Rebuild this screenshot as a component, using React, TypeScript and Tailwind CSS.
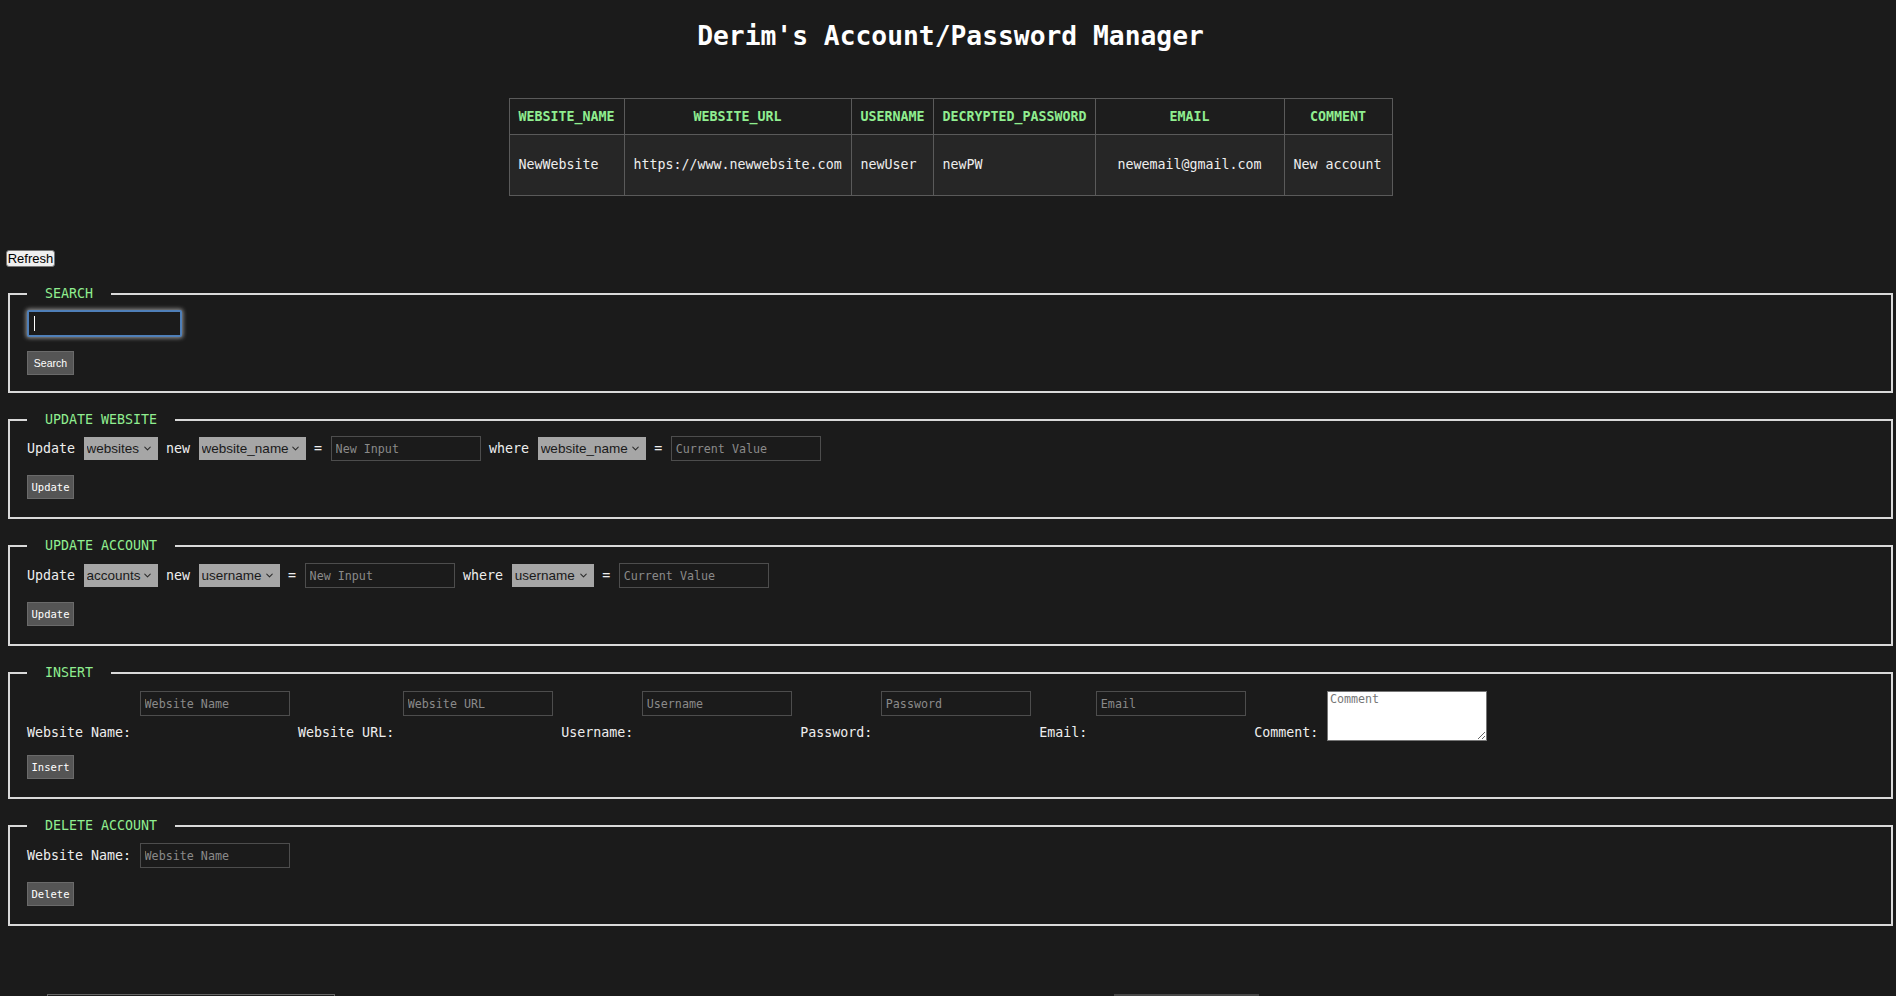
import { ChevronDown } from "lucide-react";
import type { ReactNode } from "react";

const columns = [
  { key: "WEBSITE_NAME", width: "w-[115px]" },
  { key: "WEBSITE_URL", width: "w-[227px]" },
  { key: "USERNAME", width: "w-[82px]" },
  { key: "DECRYPTED_PASSWORD", width: "w-[162px]" },
  { key: "EMAIL", width: "w-[189px]" },
  { key: "COMMENT", width: "w-[108px]" },
];

const row = {
  WEBSITE_NAME: "NewWebsite",
  WEBSITE_URL: "https://www.newwebsite.com",
  USERNAME: "newUser",
  DECRYPTED_PASSWORD: "newPW",
  EMAIL: "newemail@gmail.com",
  COMMENT: "New account",
};

function Section({ title, pad, children }: { title: string; pad: string; children: ReactNode }) {
  return (
    <fieldset className={`border-2 border-[#d9d9d9] pl-[17px] pr-[17px] ${pad}`}>
      <legend className="px-[18px] leading-[16px] text-[#90ee90]">{title}</legend>
      {children}
    </fieldset>
  );
}

function Btn({ label, sans }: { label: string; sans?: boolean }) {
  return (
    <button
      className={`mt-[14px] block h-[24px] w-[47px] border border-[#6a6a6a] bg-[#555555] text-[10.5px] text-white ${
        sans ? "font-['Liberation_Sans',Arial,sans-serif]" : ""
      }`}
    >
      {label}
    </button>
  );
}

function Dropdown({ value, width }: { value: string; width: string }) {
  return (
    <div className="relative flex items-center">
      <select
        defaultValue={value}
        className={`h-[23px] ${width} appearance-none bg-[#a6a6a6] pl-[3px] pr-[16px] font-['Liberation_Sans',Arial,sans-serif] text-[13.5px] text-[#1a1a1a]`}
      >
        <option value={value}>{value}</option>
      </select>
      <ChevronDown size={11} strokeWidth={2.2} className="pointer-events-none absolute right-[5px] text-[#2a2a2a]" />
    </div>
  );
}

function Field({ placeholder, self }: { placeholder: string; self?: string }) {
  return (
    <input
      placeholder={placeholder}
      className={`h-[25px] w-[150px] border border-[#4d4d4d] bg-transparent px-[4px] text-[11.7px] text-white placeholder:text-[#8a8a8a] ${self ?? ""}`}
    />
  );
}

export default function App() {
  return (
    <div className="min-h-screen bg-[#1b1b1b] pb-10 font-['DejaVu_Sans_Mono','Liberation_Mono',monospace] text-[13.3px] leading-[16px] text-[#eeeeee]">
      <h1 className="pl-[5px] pt-[20px] text-center text-[26.3px] font-bold leading-[32px] text-white">
        Derim's Account/Password Manager
      </h1>

      <div className="mt-[46px] flex justify-center pl-[5px]">
        <table className="w-[883px] table-fixed border-collapse border border-[#5a5a5a]">
          <thead>
            <tr className="h-[36px] bg-[#1d1d1d]">
              {columns.map((c) => (
                <th key={c.key} className={`${c.width} border border-[#5a5a5a] px-[9px] text-center font-bold text-[#90ee90]`}>
                  {c.key}
                </th>
              ))}
            </tr>
          </thead>
          <tbody>
            <tr className="h-[61px] bg-[#262626]">
              {columns.map((c) => (
                <td
                  key={c.key}
                  className={`border border-[#5a5a5a] px-[9px] ${c.key === "EMAIL" ? "text-center" : "text-left"}`}
                >
                  {row[c.key as keyof typeof row]}
                </td>
              ))}
            </tr>
          </tbody>
        </table>
      </div>

      <button className="ml-[6px] mt-[54px] block h-[17px] w-[49px] rounded-[3px] border border-[#767676] bg-[#efefef] font-['Liberation_Sans',Arial,sans-serif] text-[13px] leading-none text-black">
        Refresh
      </button>

      <div className="ml-[8px] mr-[3px] mt-[19px] flex flex-col gap-[19px]">
        <Section title="SEARCH" pad="pt-[8px] pb-[16px]">
          <div className="relative h-[27px] w-[155px]">
            <input className="h-full w-full rounded-[2px] border-2 border-[#4f7fb8] bg-[#1b1b1b] px-[5px] text-white shadow-[0_0_4px_1px_rgba(255,255,255,0.55)]" />
            <span className="absolute left-[7px] top-[6px] h-[15px] w-[1px] bg-white" />
          </div>
          <Btn label="Search" sans />
        </Section>

        <Section title="UPDATE WEBSITE" pad="pt-[8px] pb-[18px]">
          <div className="flex items-center gap-[8.5px]">
            <span>Update</span>
            <Dropdown value="websites" width="w-[74px]" />
            <span>new</span>
            <Dropdown value="website_name" width="w-[107px]" />
            <span>=</span>
            <Field placeholder="New Input" />
            <span>where</span>
            <Dropdown value="website_name" width="w-[108px]" />
            <span>=</span>
            <Field placeholder="Current Value" />
          </div>
          <Btn label="Update" />
        </Section>

        <Section title="UPDATE ACCOUNT" pad="pt-[9px] pb-[18px]">
          <div className="flex items-center gap-[8.5px]">
            <span>Update</span>
            <Dropdown value="accounts" width="w-[74px]" />
            <span>new</span>
            <Dropdown value="username" width="w-[81px]" />
            <span>=</span>
            <Field placeholder="New Input" />
            <span>where</span>
            <Dropdown value="username" width="w-[82px]" />
            <span>=</span>
            <Field placeholder="Current Value" />
          </div>
          <Btn label="Update" />
        </Section>

        <Section title="INSERT" pad="pt-[10px] pb-[18px]">
          <div className="flex items-end gap-[8.5px]">
            <span>Website Name:</span>
            <Field placeholder="Website Name" self="self-start" />
            <span>Website URL:</span>
            <Field placeholder="Website URL" self="self-start" />
            <span>Username:</span>
            <Field placeholder="Username" self="self-start" />
            <span>Password:</span>
            <Field placeholder="Password" self="self-start" />
            <span>Email:</span>
            <Field placeholder="Email" self="self-start" />
            <span>Comment:</span>
            <textarea
              placeholder="Comment"
              className="h-[50px] w-[160px] resize border border-[#767676] bg-white px-[2px] text-[11.7px] leading-[14px] text-black placeholder:text-[#777777]"
            />
          </div>
          <Btn label="Insert" />
        </Section>

        <Section title="DELETE ACCOUNT" pad="pt-[9px] pb-[18px]">
          <div className="flex items-center gap-[8.5px]">
            <span>Website Name:</span>
            <Field placeholder="Website Name" />
          </div>
          <Btn label="Delete" />
        </Section>
      </div>

      <div className="mt-[68px] flex items-start">
        <div className="ml-[47px] h-[30px] w-[288px] border border-[#666666] bg-[#1f1f1f]" />
        <div className="ml-[779px] h-[30px] w-[145px] bg-[#474747]" />
      </div>
    </div>
  );
}
